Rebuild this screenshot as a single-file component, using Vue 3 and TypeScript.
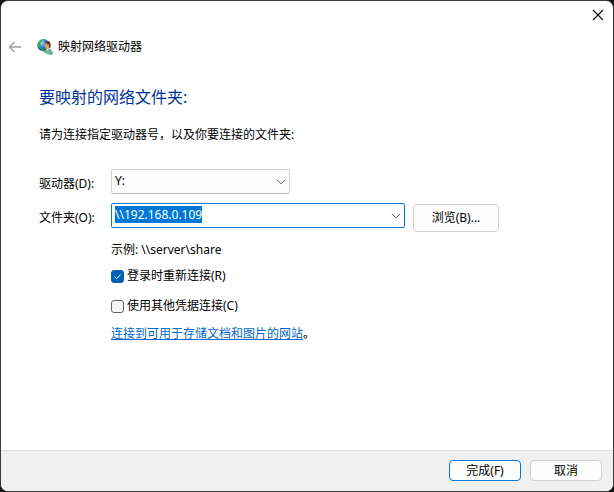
<script setup lang="ts">
import { onMounted, ref } from 'vue'

const drives: string[] = ['Z:', 'Y:', 'X:', 'W:', 'V:']
const drive = ref<string>('Y:')
const folder = ref<string>('\\\\192.168.0.109')
const example = '\\\\server\\share'
const reconnect = ref<boolean>(true)
const otherCredentials = ref<boolean>(false)
const folderInput = ref<HTMLInputElement | null>(null)

onMounted(() => {
  folderInput.value?.focus()
  folderInput.value?.select()
})
</script>

<template>
  <form class="dialog" @submit.prevent>
    <div class="titlebar">
      <button type="button" class="icon-button close" aria-label="关闭">
        <svg width="12" height="12" viewBox="0 0 12 12" fill="none" stroke="#111" stroke-width="1.1">
          <path d="M1 1 L11 11 M11 1 L1 11" />
        </svg>
      </button>
    </div>

    <header class="header">
      <button type="button" class="icon-button back" aria-label="返回" disabled>
        <svg width="14" height="12" viewBox="0 0 14 12" fill="none" stroke="#a0a0a0" stroke-width="1.3">
          <path d="M13 6 H1.5 M6.5 1 L1.5 6 L6.5 11" />
        </svg>
      </button>
      <svg class="logo" width="16" height="16" viewBox="0 0 16 16" aria-hidden="true">
        <defs>
          <radialGradient id="globe" cx="0.35" cy="0.3" r="0.75">
            <stop offset="0" stop-color="#a8e4ff" />
            <stop offset="0.45" stop-color="#2c86dc" />
            <stop offset="1" stop-color="#0a2f9c" />
          </radialGradient>
        </defs>
        <circle cx="6.4" cy="6.2" r="6.1" fill="url(#globe)" />
        <path d="M0.6 5 Q2.2 0.8 5.4 0.4 L4.8 2.6 L3.6 4 L3.8 6.4 L2.4 8.6 L0.9 8 Z" fill="#3fae3c" />
        <path d="M4 9 L6.6 8.8 L7.4 10.4 L6.4 12.2 L4.4 11.8 Z" fill="#2c9a2c" />
        <path d="M6.6 13 Q7.4 10.6 9.8 9.8 L12.4 9.6 Q15.6 11.2 16 15 L14.2 16 Q10 15.8 6.6 13 Z" fill="#5fae92" />
        <path d="M9.4 9.4 L10.6 12.2 L12.2 9.2 Z" fill="#e8f3ee" />
        <path d="M11 12 L14 14.6 M9 12.4 L11.4 14.6" stroke="#97d2b9" stroke-width="0.8" />
        <ellipse cx="10.2" cy="6.4" rx="2.6" ry="3.6" fill="#d99d70" />
        <path d="M7.6 4.8 Q7.8 1.8 10.6 1.8 Q14.2 2.2 13.6 8.2 L12 9.2 L12 5.8 Q10 5.4 9 4 Z" fill="#5f3c2a" />
      </svg>
      <span class="title">映射网络驱动器</span>
    </header>

    <main class="content">
      <h1>要映射的网络文件夹:</h1>
      <p class="intro">请为连接指定驱动器号，以及你要连接的文件夹:</p>

      <div class="fields">
        <label for="drive">驱动器(D):</label>
        <div class="combo drive">
          <select id="drive" v-model="drive">
            <option v-for="d in drives" :key="d" :value="d">{{ d }}</option>
          </select>
          <svg class="chevron" width="10" height="6" viewBox="0 0 10 6" fill="none" stroke="#555">
            <path d="M1 0.8 L5 4.8 L9 0.8" />
          </svg>
        </div>

        <label for="folder">文件夹(O):</label>
        <div class="folder-row">
          <div class="combo folder">
            <input id="folder" ref="folderInput" v-model="folder" type="text" spellcheck="false" autocomplete="off" />
            <svg class="chevron" width="10" height="6" viewBox="0 0 10 6" fill="none" stroke="#555">
              <path d="M1 0.8 L5 4.8 L9 0.8" />
            </svg>
          </div>
          <button type="button" class="button browse">浏览(B)...</button>
        </div>

        <div class="options">
          <p>示例: {{ example }}</p>
          <label class="check"><input v-model="reconnect" type="checkbox" />登录时重新连接(R)</label>
          <label class="check"><input v-model="otherCredentials" type="checkbox" />使用其他凭据连接(C)</label>
          <p><a href="#">连接到可用于存储文档和图片的网站</a>。</p>
        </div>
      </div>
    </main>

    <footer class="footer">
      <button type="submit" class="button primary">完成(F)</button>
      <button type="button" class="button">取消</button>
    </footer>
  </form>
</template>

<style>
body {
  background: #111;
}
</style>

<style scoped>
.dialog,
.dialog * {
  box-sizing: border-box;
}

.dialog {
  display: flex;
  flex-direction: column;
  min-height: 100vh;
  border: 1px solid #3a3a3a;
  border-radius: 8px;
  overflow: hidden;
  background: #fff;
  color: #000;
  font: 12px/18px "Noto Sans", "Noto Sans CJK SC", sans-serif;
}

.titlebar {
  display: flex;
  justify-content: flex-end;
  height: 30px;
  padding-right: 3px;
}

.icon-button {
  display: flex;
  align-items: center;
  justify-content: center;
  padding: 0;
  border: 0;
  background: none;
}

.close {
  width: 24px;
  height: 28px;
}

.header {
  display: flex;
  align-items: center;
  height: 32px;
  padding-left: 7px;
}

.back {
  width: 14px;
  height: 24px;
}

.logo {
  margin: 0 5px 0 15px;
}

.content {
  flex: 1;
  padding: 22px 38px;
}

h1 {
  margin: 0;
  color: #003399;
  font-size: 16px;
  font-weight: 400;
  line-height: 24px;
}

p {
  margin: 0;
}

.intro {
  margin: 17px 0 25px;
}

.fields {
  display: grid;
  grid-template-columns: 72px 1fr;
  row-gap: 9px;
}

.fields > label {
  padding-top: 6px;
}

.folder-row {
  display: flex;
  gap: 8px;
}

.combo {
  position: relative;
  height: 25px;
}

.drive {
  width: 179px;
}

.folder {
  flex: 0 1 294px;
}

.combo select,
.combo input {
  display: block;
  width: 100%;
  height: 100%;
  margin: 0;
  padding: 0 24px 1px 3px;
  border: 1px solid #d0d0d0;
  border-bottom-color: #b8b8b8;
  border-radius: 2px;
  outline: 0;
  appearance: none;
  background: #fdfdfd;
  color: #000;
  font: inherit;
}

.combo input {
  padding-bottom: 2px;
  border-color: #0078d4;
  background: #fff;
}

.combo input::selection {
  background: #0078d7;
  color: #fff;
}

.chevron {
  position: absolute;
  top: 10px;
  right: 4px;
  pointer-events: none;
}

.button {
  width: 72px;
  height: 21px;
  padding: 0;
  border: 1px solid #d0d0d0;
  border-radius: 4px;
  background: #fdfdfd;
  color: #000;
  font: inherit;
  line-height: 18px;
}

.browse {
  width: 86px;
  height: 28px;
  margin-top: 1px;
}

.primary {
  border-color: #0078d4;
}

.options {
  grid-column: 2;
  display: flex;
  flex-direction: column;
  align-items: flex-start;
}

.check {
  display: flex;
  align-items: center;
  gap: 3px;
  margin-top: 8px;
}

.check + .check {
  margin: 12px 0 10px;
}

.check input {
  width: 13px;
  height: 13px;
  margin: 0;
  border: 1px solid #666;
  border-radius: 3px;
  appearance: none;
  background: #f5f5f5;
}

.check input:checked {
  border-color: #005fb8;
  background: #005fb8 url("data:image/svg+xml,%3Csvg xmlns='http://www.w3.org/2000/svg' viewBox='0 0 11 11'%3E%3Cpath d='M2.5 5.6L4.6 7.7L8.6 3.6' fill='none' stroke='white'/%3E%3C/svg%3E") center / 11px no-repeat;
}

a {
  color: #0066cc;
}

.footer {
  display: flex;
  justify-content: flex-end;
  gap: 9px;
  padding: 9px 11px 10px;
  border-top: 1px solid #dfdfdf;
  background: #f0f0f0;
}
</style>
